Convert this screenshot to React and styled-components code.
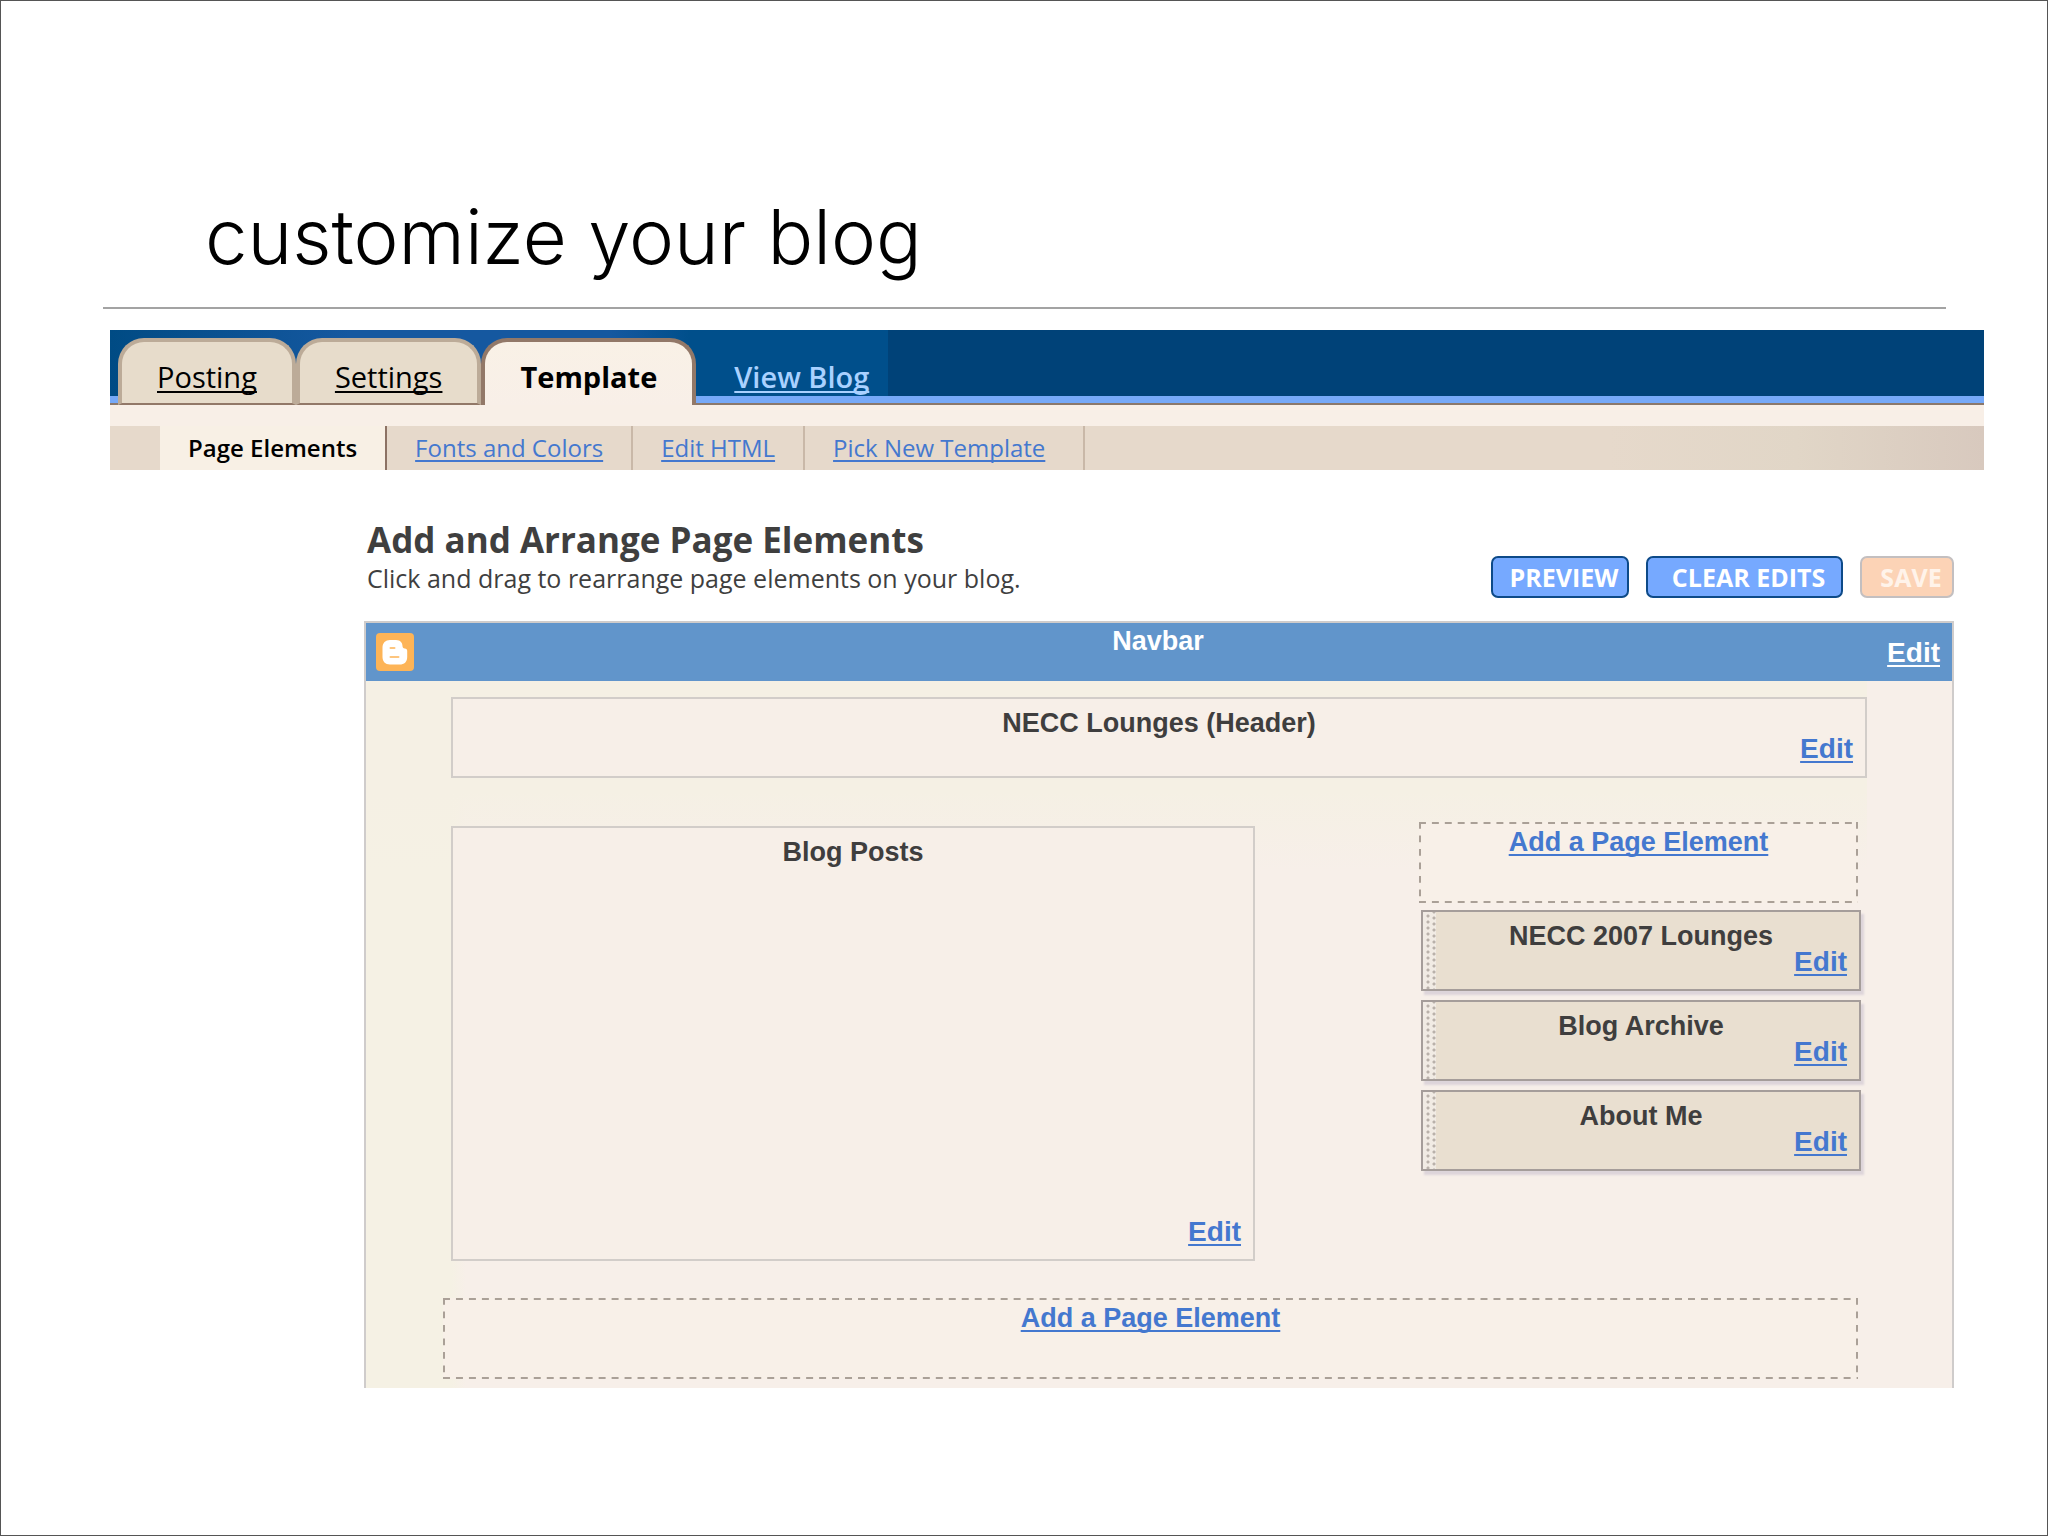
import styled, { createGlobalStyle, css } from "styled-components";

const tabs = [
  { label: "Posting" },
  { label: "Settings" },
  { label: "Template", active: true },
];

const subTabs = [
  { label: "Page Elements", active: true },
  { label: "Fonts and Colors" },
  { label: "Edit HTML" },
  { label: "Pick New Template" },
];

const widgets = ["NECC 2007 Lounges", "Blog Archive", "About Me"];

const App = () => {
  return (
    <>
      <GlobalStyle />
      <Slide>
        <SlideTitle>customize your blog</SlideTitle>
        <Rule />

        <Screen>
          <TabBar>
            {tabs.map(({ label, active }) => (
              <Tab key={label} href="#" $active={active}>{label}</Tab>
            ))}
            <ViewBlog href="#">View Blog</ViewBlog>
          </TabBar>

          <SubBar>
            {subTabs.map(({ label, active }) => (
              <SubTab key={label} href="#" $active={active}>{label}</SubTab>
            ))}
          </SubBar>

          <Content>
            <Toolbar>
              <div>
                <Heading>Add and Arrange Page Elements</Heading>
                <Hint>Click and drag to rearrange page elements on your blog.</Hint>
              </div>
              <Buttons>
                <Button type="button">PREVIEW</Button>
                <Button type="button">CLEAR EDITS</Button>
                <Button type="button" disabled>SAVE</Button>
              </Buttons>
            </Toolbar>

            <Editor>
              <Navbar>
                <BloggerIcon />
                <NavTitle>Navbar</NavTitle>
                <NavEdit href="#">Edit</NavEdit>
              </Navbar>

              <Layout>
                <HeaderBox>
                  <BoxTitle>NECC Lounges (Header)</BoxTitle>
                  <EditLink href="#">Edit</EditLink>
                </HeaderBox>

                <Columns>
                  <PostsBox>
                    <BoxTitle>Blog Posts</BoxTitle>
                    <EditLink href="#">Edit</EditLink>
                  </PostsBox>

                  <Sidebar>
                    <AddBox>
                      <AddLink href="#">Add a Page Element</AddLink>
                    </AddBox>
                    <WidgetList>
                      {widgets.map((title) => (
                        <Widget key={title}>
                          <BoxTitle>{title}</BoxTitle>
                          <EditLink href="#">Edit</EditLink>
                        </Widget>
                      ))}
                    </WidgetList>
                  </Sidebar>
                </Columns>

                <FooterAddBox>
                  <AddLink href="#">Add a Page Element</AddLink>
                </FooterAddBox>
              </Layout>
            </Editor>
          </Content>
        </Screen>
      </Slide>
    </>
  );
};

const BloggerIcon = () => (
  <svg width="38" height="38" viewBox="0 0 38 38" aria-hidden="true">
    <rect width="38" height="38" rx="4" fill="#fdb457" />
    <path
      d="M14 7h6c4.500 0 6.500 3 6.500 6 0 1.600.8 2.500 2.200 2.500 1.800 0 2.500 1 2.500 2.500v6c0 5-3 7.500-7.500 7.500H14c-4.800 0-7.500-3-7.500-7.500V14.500C6.500 10 9.500 7 14 7z"
      fill="#fff"
    />
    <path d="M14.500 15h4M14.500 24h8" stroke="#fdc57e" strokeWidth="2" strokeLinecap="round" />
  </svg>
);

const GlobalStyle = createGlobalStyle`
  * {
    box-sizing: border-box;
  }

  body {
    margin: 0;
    background-color: #fff;
    font-family: "Open Sans", "Trebuchet MS", sans-serif;
  }

  a {
    text-decoration-thickness: 2px;
    text-decoration-skip-ink: none;
    text-underline-offset: 3px;
  }
`;

const Slide = styled.main`
  min-height: 100vh;
  border: 1px solid #555;
  padding: 185px 63px 0 102px;
`;

const SlideTitle = styled.h1`
  margin: 0 0 21px;
  padding-left: 102px;
  font-family: Inter, "Helvetica Neue", sans-serif;
  font-size: 76px;
  font-weight: 300;
  line-height: 100px;
  color: #000;
`;

const Rule = styled.hr`
  height: 2px;
  margin: 0 38px 21px 0;
  border: none;
  background-color: #a3a3a3;
`;

const Screen = styled.section`
  margin-left: 7px;
`;

const TabBar = styled.nav`
  display: flex;
  height: 75px;
  padding: 8px 8px 0;
  background:
    linear-gradient(to top, #8b786c 2px, #76a9f8 2px 9px, transparent 9px),
    linear-gradient(to right, #004b84, #1558a0 240px 500px, #004f8b 580px 778px, #004278 778px);
`;

const Tab = styled.a`
  padding: 15px 35px 0;
  border: 4px solid #bcab98;
  border-bottom: 2px solid #927868;
  border-radius: 26px 26px 0 0;
  background-color: #e7dccb;
  color: #000;
  font-size: 29px;
  line-height: 40px;

  ${({ $active }) => $active && css`
    border-color: #927868;
    border-bottom: none;
    background: linear-gradient(#f9f1e6, #f8efe8);
    font-weight: 700;
    text-decoration: none;
  `}
`;

const ViewBlog = styled.a`
  padding: 19px 38px 0;
  color: #a9d1ff;
  font-size: 29px;
  font-weight: 600;
  line-height: 40px;
`;

const SubBar = styled.nav`
  display: flex;
  padding-left: 50px;
  border-top: 21px solid #f8efe7;
  background: linear-gradient(to right, #e6d9cb 80%, #e1d6c7 90%, #d8c9be);
`;

const SubTab = styled.a`
  padding: 0 28px;
  border-right: 2px solid #c9b8a8;
  color: #4478cf;
  font-size: 24px;
  line-height: 44px;

  &:last-child {
    min-width: 280px;
  }

  ${({ $active }) => $active && css`
    border-right-color: #8c7264;
    background-color: #f8f0e5;
    color: #000;
    font-weight: 600;
    text-decoration: none;
  `}
`;

const Content = styled.div`
  padding: 48px 30px 0 254px;
`;

const Toolbar = styled.div`
  display: flex;
  align-items: flex-end;
  justify-content: space-between;
  padding-bottom: 23px;
`;

const Heading = styled.h2`
  margin: 0;
  padding-left: 3px;
  color: #3f3f3f;
  font-size: 35px;
  font-weight: 700;
  line-height: 44px;
`;

const Hint = styled.p`
  margin: 0;
  padding: 0 0 4px 3px;
  color: #3f3f3f;
  font-size: 25px;
  line-height: 32px;
`;

const Buttons = styled.div`
  display: grid;
  grid-template-columns: 138px 197px 94px;
  gap: 17px;
`;

const Button = styled.button`
  height: 42px;
  padding: 0 0 0 8px;
  border: 2px solid #0d4a88;
  border-radius: 7px;
  background-color: #76a9ff;
  color: #fff;
  font-family: inherit;
  font-size: 25px;
  font-weight: 700;
  line-height: 38px;
  cursor: pointer;

  &:disabled {
    border-color: #c3bfc0;
    background-color: #fcd3b6;
    color: #fff3ea;
    cursor: default;
  }
`;

const Editor = styled.div`
  border: 2px solid #cfcccb;
  border-bottom: none;
  font-family: "Liberation Sans", Arial, sans-serif;
  font-size: 27px;
  font-weight: 700;
  line-height: 26px;
`;

const Navbar = styled.div`
  display: grid;
  grid-template-columns: 1fr auto 1fr;
  align-items: center;
  height: 58px;
  padding: 0 12px 0 10px;
  background-color: #6195cb;
  color: #fff;
`;

const NavTitle = styled.span`
  align-self: start;
  padding-top: 5px;
`;

const NavEdit = styled.a`
  justify-self: end;
  padding-top: 2px;
  color: #fff;
  font-size: 28px;
`;

const Layout = styled.div`
  display: flex;
  flex-direction: column;
  padding: 16px 85px 9px 77px;
  background:
    linear-gradient(#f5f0e4 0 110px, transparent 190px) 0 0 / calc(100% - 85px) 100% no-repeat,
    linear-gradient(to right, #f5f1e4 85px, #f7efe9 100px);
`;

const Box = styled.div`
  display: flex;
  flex-direction: column;
  justify-content: space-between;
  min-height: 81px;
  padding: 11px 12px 14px;
  border: 2px solid #d2cdc9;
  background-color: #f7efe8;
`;

const HeaderBox = styled(Box)`
  margin-left: 8px;
`;

const PostsBox = styled(Box)`
  height: 435px;
  margin: 4px 0 0 8px;
`;

const BoxTitle = styled.span`
  align-self: center;
  color: #3f3e3e;
`;

const EditLink = styled.a`
  align-self: flex-end;
  color: #4478cf;
  font-size: 28px;
`;

const Columns = styled.div`
  display: grid;
  grid-template-columns: 812fr 442fr;
  align-items: start;
  gap: 164px;
  margin: 44px 6px 37px 0;
`;

const Sidebar = styled.aside`
  display: flex;
  flex-direction: column;
  gap: 7px;
`;

/* Dashes are 7px long on a 13px step, longer than a dashed border draws them */
const AddBox = styled.div`
  height: 81px;
  margin-right: 3px;
  padding-top: 7px;
  background:
    linear-gradient(to right, #aaa097 7px, transparent 7px) 0 0 / 13px 2px round no-repeat,
    linear-gradient(to right, #aaa097 7px, transparent 7px) 0 100% / 13px 2px round no-repeat,
    linear-gradient(#aaa097 7px, transparent 7px) 0 0 / 2px 13px no-repeat round,
    linear-gradient(#aaa097 7px, transparent 7px) 100% 0 / 2px 13px no-repeat round,
    #f8f0e8;
  text-align: center;
`;

const FooterAddBox = styled(AddBox)`
  margin-right: 9px;
`;

const AddLink = styled.a`
  color: #4478cf;
`;

const WidgetList = styled.div`
  display: flex;
  flex-direction: column;
  gap: 9px;
  margin-left: 2px;
`;

/* The dotted strip on the left is the drag handle */
const Widget = styled(Box)`
  border-color: #a59d9a;
  background:
    radial-gradient(circle at 4px 4px, #b9b1aa 1px, transparent 2px) 1px 0 / 6px 6px repeat-y,
    radial-gradient(circle at 4px 4px, #b9b1aa 1px, transparent 2px) 7px 2px / 6px 6px repeat-y,
    linear-gradient(to right, #f1ebe4 13px, #e9dfd0 13px);
  box-shadow: 3px 4px 2px #ddd5da;
`;

export default App;
